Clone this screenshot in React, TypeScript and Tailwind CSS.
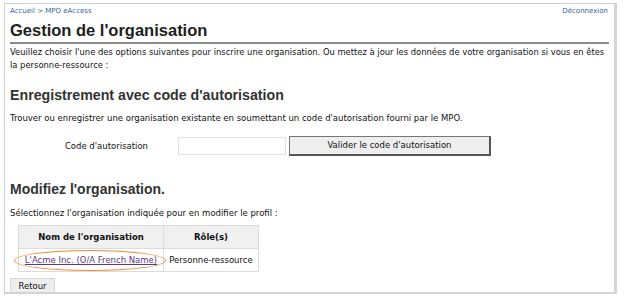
export default function App() {
  const body = { fontFamily: '"DejaVu Sans", Verdana, sans-serif' };
  const head = { fontFamily: '"Liberation Sans", Arial, sans-serif' };
  return (
    <div className="w-[624px] h-[298px] bg-white pt-[3px] pl-[4px]">
      <div
        className="w-[613px] h-[291px] border border-[#cfcfcf] border-r-[3px] border-b-[2px] border-r-[#d4d4d4] border-b-[#d4d4d4] overflow-hidden pl-[5px] pr-[2px] pt-[2px]"
        style={body}
      >
        <div className="flex justify-between text-[7px] text-[#3a5f9e] leading-[10px] pr-[3px]">
          <span>Accueil &gt; MPO eAccess</span>
          <span className="pr-[1px]">Déconnexion</span>
        </div>
        <h1
          className="text-[16.5px] font-bold text-[#1e1e1e] leading-[22px] mt-[3px] pb-[1px] border-b-2 border-[#8a8a8a] mr-[3px]"
          style={head}
        >
          Gestion de l'organisation
        </h1>
        <p className="text-[8.4px] leading-[13px] text-[#111] mt-[2px]">
          Veuillez choisir l'une des options suivantes pour inscrire une organisation. Ou mettez à jour les données de votre organisation si vous en êtes la personne-ressource :
        </p>
        <h2 className="text-[14.2px] font-bold text-[#333] leading-[18px] mt-[14px]" style={head}>
          Enregistrement avec code d'autorisation
        </h2>
        <p className="text-[8.5px] leading-[12px] text-[#111] mt-[8px]">
          Trouver ou enregistrer une organisation existante en soumettant un code d'autorisation fourni par le MPO.
        </p>
        <div className="flex items-center mt-[12px]">
          <span className="w-[168px] text-right pr-[30px] text-[8.5px] text-[#111]">Code d'autorisation</span>
          <input className="w-[108px] h-[18px] border border-[#e2e2e2] bg-white" />
          <button className="ml-[3px] w-[202px] h-[20px] bg-[#eeeeee] border border-[#777] border-r-2 border-b-2 border-r-[#555] border-b-[#555] text-[8.5px] text-[#111]">
            Valider le code d'autorisation
          </button>
        </div>
        <h2 className="text-[14px] font-bold text-[#333] leading-[18px] mt-[24px]" style={head}>
          Modifiez l'organisation.
        </h2>
        <p className="text-[8.5px] leading-[12px] text-[#111] mt-[9px]">
          Sélectionnez l'organisation indiquée pour en modifier le profil :
        </p>
        <table className="mt-[6px] ml-[8px] border-collapse text-[8.5px] text-[#111]">
          <thead>
            <tr className="bg-[#f0f0f0]">
              <th className="w-[145px] h-[23px] p-0 border border-[#dcdcdc] font-bold">Nom de l'organisation</th>
              <th className="w-[95px] h-[23px] p-0 border border-[#dcdcdc] font-bold">Rôle(s)</th>
            </tr>
          </thead>
          <tbody>
            <tr>
              <td className="h-[23px] p-0 border border-[#dcdcdc] text-center relative">
                <a className="text-[#5b3a8c] underline">L'Acme Inc. (O/A French Name)</a>
                <span className="absolute left-[-5px] top-[1px] w-[152px] h-[21px] rounded-[50%] border-[1.5px] border-[#f08a30]" />
              </td>
              <td className="h-[23px] p-0 border border-[#dcdcdc] text-center">Personne-ressource</td>
            </tr>
          </tbody>
        </table>
        <button className="mt-[5px] w-[45px] h-[17px] bg-[#eeeeee] border border-[#d6d6d6] text-[8.5px] leading-[14px] text-[#111]">
          Retour
        </button>
      </div>
    </div>
  );
}
